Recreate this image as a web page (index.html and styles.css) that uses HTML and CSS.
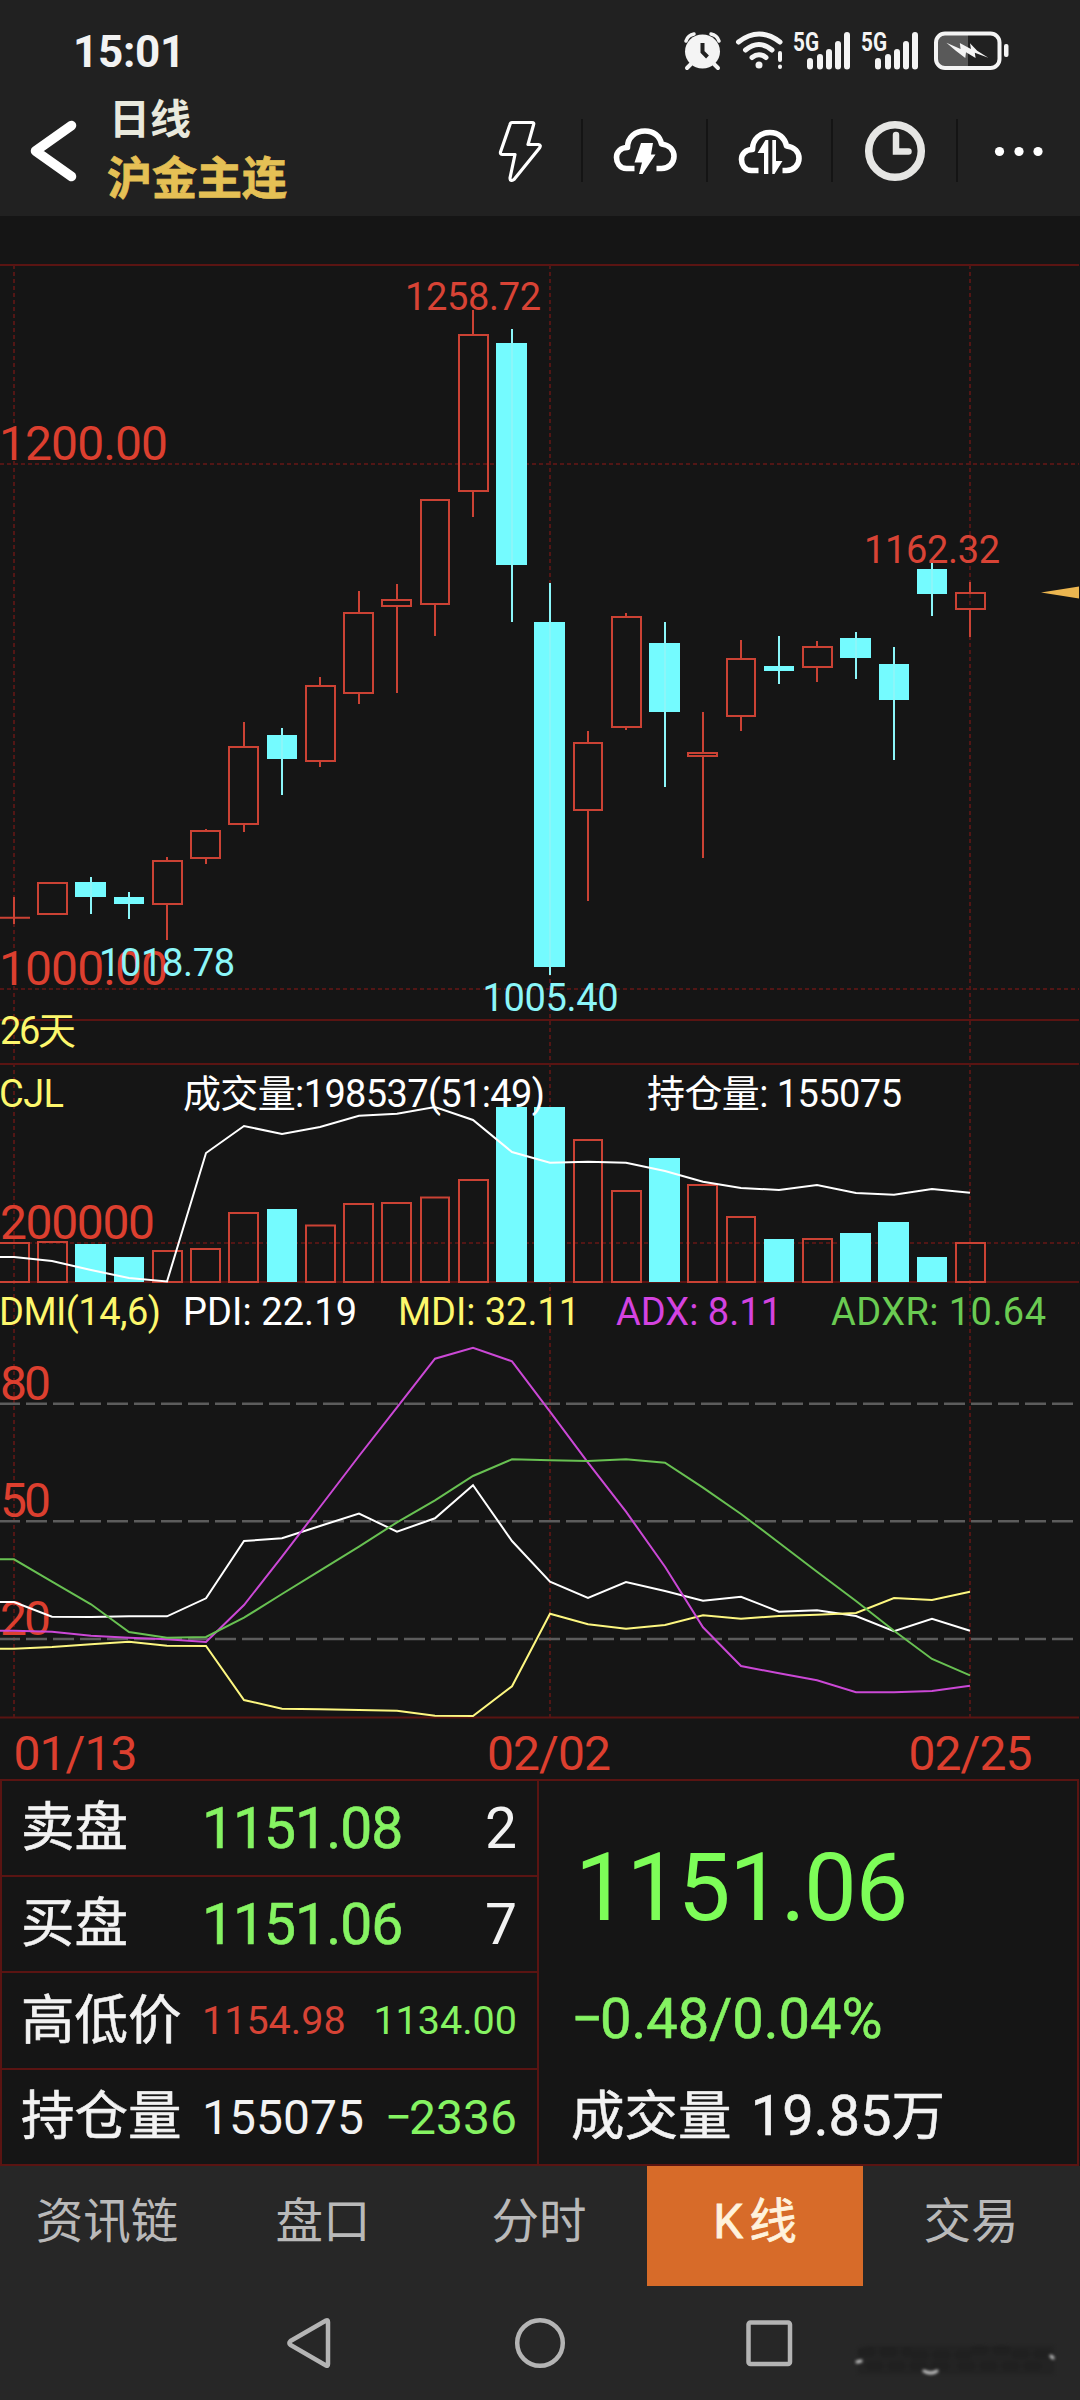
FILE: index.html
```html
<!DOCTYPE html>
<html lang="zh-CN">
  <head>
    <meta charset="UTF-8" />
    <meta name="viewport" content="width=device-width, initial-scale=1.0" />
    <title>沪金主连 日线</title>
    <link rel="stylesheet" href="styles.css">
  </head>
  <body>
    <header class="header">
      <div class="status">
        <span class="time">15:01</span>
        <svg class="status-icons" width="334" height="44" viewBox="680 28 334 44">
          <!-- alarm -->
          <ellipse cx="702.500" cy="51.500" rx="17.500" ry="17" />
          <path class="s3" d="M686 41Q688 35 694 34M719 41Q717 35 711 34" />
          <path class="s4" d="M691 64l-4 4M714 64l4 4" />
          <path class="cut" d="M702.500 43v9l5 5" />
          <!-- wifi -->
          <path class="s5" d="M738.500 42Q759 26 780 42M745.500 50Q759 39 772 50M752 57.500Q759 52 766 57.500" />
          <circle cx="759" cy="65" r="3.500" />
          <path class="cut-thick" d="M780 52v16" />
          <path class="s4" d="M780 53v7M780 66.500v.5" />
          <!-- signal -->
          <text x="793" y="51" textLength="26" lengthAdjust="spacingAndGlyphs">5G</text>
          <path class="s6" d="M810 61v5.500M820 57v9.500M829 52v14.500M838 44v22.500M847 35v31.500" />
          <text x="861" y="51" textLength="26" lengthAdjust="spacingAndGlyphs">5G</text>
          <path class="s6" d="M878 61v5.500M888 57v9.500M897 52v14.500M906 44v22.500M915 35v31.500" />
          <!-- battery -->
          <path class="charge" d="M944 34h24v33h-24q-8 0-8-8v-17q0-8 8-8z" />
          <rect class="shell" x="936" y="33.500" width="63.500" height="34.500" rx="9" />
          <rect x="1004" y="44" width="4.500" height="13" rx="2" />
          <path d="M946.400 42.700L960.600 49L959.800 43L970.900 49L970 43.300L977.200 50.700L988.300 57.700L974.800 52.700L975.600 58L966 52.300L965.300 58L955.800 50.700z" />
        </svg>
      </div>
      <div class="bar">
        <svg class="back" width="50" height="66" viewBox="28 118 50 66"><path d="M71.500 125.500L35.500 151L71.500 176.500" /></svg>
        <div class="title">
          <div class="period">日线</div>
          <div class="name">沪金主连</div>
        </div>
        <div class="tools">
          <div class="tool">
            <svg width="70" height="66" viewBox="484.500 118 70 66">
              <path class="line thin" d="M511.500 122.500H531.500Q534 122.500 533 125L527.500 144.500H538Q541 145 539 148L513.500 179.500Q509.500 182 509.500 178L514.500 154.500H502Q499.500 154.500 500 152L509.500 124.500Q510 122.500 511.500 122.500z" />
            </svg>
          </div>
          <div class="tool">
            <svg width="70" height="66" viewBox="609.500 118 70 66">
              <path class="line" d="M634 168.500H626C619 168.500 616 162.500 616 157.500C616 152 620 147.500 627 147.500C627 137 635 131 644.500 131C653 131 659.500 136 661 144C669 145 673.500 150 673.500 156.500C673.500 163 668 168.500 661 168.500H656" />
              <path class="solid" d="M640.500 143H652.500L650.500 154.500H655L642 174H638.500L641.500 162.500H634z" />
            </svg>
          </div>
          <div class="tool">
            <svg width="70" height="66" viewBox="734.500 118 70 66">
              <path class="line" d="M758 170.500H751C744 170.500 741 164.500 741 159.500C741 154 745 149.500 752 149.500C752 139 760 132.500 769.500 132.500C778 132.500 784.500 138 786 146C794 147 798.500 152 798.500 158.500C798.500 165 793 170.500 786 170.500H782" />
              <path class="solid" d="M763.500 174V153H757L765 140H767.800V174zM771.800 140H775.500V161H782L774 174H771.800z" />
            </svg>
          </div>
          <div class="tool">
            <svg width="70" height="66" viewBox="859.500 118 70 66">
              <circle class="ring" cx="894.500" cy="151" r="26.300" />
              <path class="hand" d="M895.500 135V151.500H908" />
            </svg>
          </div>
          <div class="tool">
            <svg width="70" height="66" viewBox="984.500 118 70 66">
              <circle class="solid" cx="1000" cy="151.500" r="4.600" />
              <circle class="solid" cx="1019.500" cy="151.500" r="4.600" />
              <circle class="solid" cx="1038.500" cy="151.500" r="4.600" />
            </svg>
          </div>
        </div>
      </div>
    </header>

    <svg class="chart" width="1080" height="1563" viewBox="0 216 1080 1563">
      <!-- grid -->
      <path class="grid" d="M0 265H1079M0 1020H1079M0 1064H1079M0 1282H1079M0 1717.500H1079" />
      <path class="grid dash" d="M14 265V1717M550 265V1717M970 265V1717M0 464H1079M0 989H1079M0 1243H1079" />
      <path class="level" d="M0 1403.700H1079M0 1521.300H1079M0 1639H1079" />

      <!-- axis text -->
      <g class="axis">
        <text x="-1" y="459.500" textLength="169">1200.00</text>
        <text x="-1" y="984.500" textLength="169">1000.00</text>
        <text x="0" y="1238.500" textLength="155">200000</text>
        <text x="0" y="1399.500" textLength="51">80</text>
        <text x="0" y="1517" textLength="51">50</text>
        <text x="0" y="1634.500" textLength="51">20</text>
        <text x="13.500" y="1769.500" textLength="124">01/13</text>
        <text x="487" y="1769.500" textLength="124">02/02</text>
        <text x="908.500" y="1769.500" textLength="124">02/25</text>
      </g>

      <!-- candles up -->
      <path class="up" d="M0 917.700H30M14 897V924
        M38 883h29v31h-29z
        M153 861h29v43h-29zM167 857v4M167 904V940
        M191 831h29v27h-29zM206 829v2M206 858V864
        M229 747h29v77h-29zM244 722V747M244 824V832
        M306 686h29v75h-29zM320 677V686M320 761V767
        M344 613h29v80h-29zM359 591V613M359 693V704
        M382 600h29v6h-29zM397 584V600M397 606V693
        M421 500h28v104h-28zM435 604V636
        M459 335h29v156h-29zM473 310V335M473 491V517
        M574 743h28v67h-28zM588 731V743M588 810V901
        M612 617h29v110h-29zM626 613V617M626 727V730
        M688 753h29v3h-29zM703 712V753M703 756V858
        M727 659h28v57h-28zM741 640V659M741 716V731
        M803 647h29v20h-29zM817 641V647M817 667V682
        M956 593h29v16h-29zM970 582V593M970 609V637" />
      <!-- candles down -->
      <path class="down" d="M75 882h31v15h-31zM114 897h30v7h-30zM267 735h30v24h-30zM496 343h31v222h-31zM534 622h31v345h-31zM649 643h31v69h-31zM764 666h30v5h-30zM840 638h31v20h-31zM879 664h30v36h-30zM917 569h30v25h-30z" />
      <path class="down-wick" d="M91 877V914M129 892V919M282 728V795M512 329V622M550 583V975M665 622V787M779 636V684M856 632V679M894 647V760M932 563V616" />

      <g class="tag up-tag">
        <text x="405" y="310" textLength="136">1258.72</text>
        <text x="864" y="562.500" textLength="136">1162.32</text>
      </g>
      <g class="tag down-tag">
        <text x="99" y="975.500" textLength="136">1018.78</text>
        <text x="482.500" y="1010.500" textLength="136">1005.40</text>
      </g>
      <path class="pointer" d="M1041 592.500L1079 586.500V598.500z" />
      <text class="tag yellow" x="0" y="1044" textLength="76">26天</text>

      <!-- volume -->
      <path class="up" d="M-1 1243h30v39h-30zM38 1242h29v40h-29zM153 1251h29v31h-29zM191 1249h29v33h-29zM229 1213h29v69h-29zM306 1225.500h29v56.500h-29zM344 1204h29v78h-29zM382 1203h29v79h-29zM421 1197.500h28v84.500h-28zM459 1180h29v102h-29zM574 1140h28v142h-28zM612 1191h29v91h-29zM688 1185h29v97h-29zM727 1217h28v65h-28zM803 1239h29v43h-29zM956 1243h29v39h-29z" />
      <path class="down" d="M75 1244h31v38h-31zM114 1257h30v25h-30zM267 1209h30v73h-30zM496 1107h31v175h-31zM534 1107h31v175h-31zM649 1158h31v124h-31zM764 1239h30v43h-30zM840 1233h31v49h-31zM878 1222h31v60h-31zM917 1257h30v25h-30z" />
      <polyline class="curve white" points="0,1257 14,1257 52,1261 91,1270 129,1278 167,1281.500 206,1153 244,1126 282,1134 320,1127 359,1115.700 397,1113.700 435,1107 473,1120 512,1152 550,1162.700 588,1161.700 626,1162.700 665,1171 703,1181.700 741,1188 779,1190 817,1185 856,1193 894,1194.700 932,1189 970,1192.700" />
      <text class="tag yellow" x="-1" y="1106.500" textLength="65">CJL</text>
      <text class="tag" x="183" y="1106.500" textLength="362">成交量:198537(51:49)</text>
      <text class="tag" x="647" y="1106.500" textLength="255">持仓量: 155075</text>

      <!-- DMI -->
      <text class="tag yellow" x="-1" y="1324.500" textLength="162">DMI(14,6)</text>
      <text class="tag" x="183" y="1324.500" textLength="174">PDI: 22.19</text>
      <text class="tag yellow" x="398" y="1324.500" textLength="182">MDI: 32.11</text>
      <text class="tag magenta" x="616" y="1324.500" textLength="166">ADX: 8.11</text>
      <text class="tag green" x="831" y="1324.500" textLength="215">ADXR: 10.64</text>
      <polyline class="curve white" points="0,1602 14,1602 52,1616.700 91,1617 129,1616.300 167,1616.300 206,1598.300 244,1541 282,1538.300 320,1526 359,1513.500 397,1531.700 435,1518.300 473,1485.300 512,1541 550,1581.700 588,1598 626,1582 665,1591 703,1600.700 741,1596.700 779,1611.700 817,1610.300 856,1616 894,1631.300 932,1618.700 970,1630.700" />
      <polyline class="curve yellow" points="0,1648.700 14,1648.700 52,1647 91,1644.300 129,1641.700 167,1645.700 206,1646 244,1700 282,1708.700 320,1709.300 359,1710 397,1710.700 435,1715.700 473,1716 512,1686.300 550,1613.700 588,1624.300 626,1628.700 665,1625 703,1615.300 741,1618.700 779,1616 817,1614.700 856,1613 894,1598 932,1600 970,1591.700" />
      <polyline class="curve magenta" points="0,1630.700 14,1630.700 52,1631.700 91,1635.700 129,1637.700 167,1639.300 206,1642 244,1605 282,1556.700 320,1507 359,1456 397,1407.300 435,1358.700 473,1347.700 512,1361.300 550,1411.700 588,1462.700 626,1511.700 665,1566.700 703,1627.300 741,1666 779,1673.300 817,1680.300 856,1692.300 894,1692.300 932,1691 970,1685.700" />
      <polyline class="curve green" points="0,1559.300 14,1559.300 52,1581.700 91,1604.300 129,1632 167,1637.700 206,1637 244,1617.700 282,1594 320,1570.700 359,1546.700 397,1522.300 435,1500.300 473,1476 512,1459.300 550,1460.300 588,1461 626,1459.300 665,1462.700 703,1487.700 741,1514 779,1542.700 817,1571.700 856,1601 894,1630.700 932,1659 970,1675.300" />
    </svg>

    <section class="quote">
      <div class="book">
        <div class="row"><span class="label">卖盘</span><span class="price">1151.08</span><span class="count">2</span></div>
        <div class="row"><span class="label">买盘</span><span class="price">1151.06</span><span class="count">7</span></div>
        <div class="row"><span class="label">高低价</span><span class="small high">1154.98</span><span class="small low">1134.00</span></div>
        <div class="row"><span class="label">持仓量</span><span class="mid">155075</span><span class="mid low"><i class="minus">−</i>2336</span></div>
      </div>
      <div class="last">
        <div class="last-price">1151.06</div>
        <div class="change"><i class="minus">−</i>0.48/0.04%</div>
        <div class="volume">成交量 <span>19.85</span>万</div>
      </div>
    </section>

    <nav class="tabs">
      <div class="tab">资讯链</div>
      <div class="tab">盘口</div>
      <div class="tab">分时</div>
      <div class="tab active">K线</div>
      <div class="tab">交易</div>
    </nav>

    <footer class="sysnav">
      <svg width="1080" height="114" viewBox="0 2286 1080 114">
        <path class="key" d="M290.500 2341L326 2320.500Q328 2319.500 328 2322V2364Q328 2366.500 326 2365.500L290.500 2345Q288.500 2343 290.500 2341z" />
        <circle class="key" cx="540" cy="2343" r="22.800" />
        <rect class="key" x="748.500" y="2322.500" width="41.500" height="41.500" rx="2" />
        <g class="smudge">
          <path class="patch" d="M866 2346H1054V2374H858V2354z" />
          <path class="dark" d="M862 2352h46M915 2355h52M975 2350h38M1016 2354h36M870 2366h80M962 2366h88" />
          <path class="light" d="M857 2362l4-1M924 2371q7 4 13 0M1051 2356l2 2" />
        </g>
      </svg>
    </footer>
  </body>
</html>
```

FILE: styles.css
```css
* {
  box-sizing: border-box;
}
body {
  margin: 0;
  width: 1080px;
  height: 2400px;
  overflow: hidden;
  display: flex;
  flex-direction: column;
  background: #151515;
  color: #f2f2f2;
  font-family: Roboto, "Noto Sans CJK SC", sans-serif;
}
svg {
  display: block;
  flex: none;
}

/* header */
.header {
  height: 216px;
  background: #212121;
}
.status {
  display: flex;
  align-items: center;
  height: 100px;
  padding: 0 66px 0 73px;
}
.time {
  padding-top: 4px;
  font-size: 44px;
  font-weight: 700;
  letter-spacing: -0.3px;
}
.status-icons {
  margin-left: auto;
  fill: #f4f4f4;
}
.status-icons path[class^="s"] {
  fill: none;
  stroke: #f4f4f4;
  stroke-linecap: round;
}
.s3 {
  stroke-width: 3.5;
}
.s4 {
  stroke-width: 4;
}
.s5 {
  stroke-width: 5;
}
.s6 {
  stroke-width: 6;
}
.cut,
.cut-thick {
  fill: none;
  stroke: #212121;
  stroke-width: 4;
}
.cut-thick {
  stroke-width: 9;
}
.status-icons text {
  font-size: 26px;
  font-weight: 700;
}
.charge {
  fill: #595959;
}
.shell {
  fill: none;
  stroke: #f4f4f4;
  stroke-width: 4;
}

.bar {
  display: flex;
  height: 116px;
  padding: 0 0 0 28px;
}
.back {
  margin-top: 18px;
  fill: none;
  stroke: #fff;
  stroke-width: 9.5;
  stroke-linecap: round;
  stroke-linejoin: round;
}
.title {
  flex: none;
  width: 352px;
  margin: -10px 0 0 28px;
  white-space: nowrap;
}
.period {
  padding-left: 3px;
  height: 60px;
  line-height: 60px;
  font-size: 41px;
  font-weight: 700;
  color: #e9e9dd;
}
.name {
  padding-left: 1px;
  height: 60px;
  line-height: 60px;
  font-size: 45px;
  font-weight: 700;
  color: #e5c055;
  -webkit-text-stroke: 0.8px #e5c055;
}
.tools {
  display: flex;
  flex: none;
  margin-top: 19px;
}
.tool {
  flex: none;
  width: 125px;
  height: 63px;
  display: flex;
  justify-content: center;
  align-items: center;
  border-right: 2px solid #141414;
}
.tool:last-child {
  width: 122px;
  border: none;
}
.line {
  fill: none;
  stroke: #fff;
  stroke-width: 5.6;
  stroke-linejoin: round;
}
.thin {
  stroke-width: 3.2;
}
.solid {
  fill: #fff;
}
.ring {
  fill: none;
  stroke: #e6e6e4;
  stroke-width: 7.5;
}
.hand {
  fill: none;
  stroke: #e6e6e4;
  stroke-width: 6.5;
  stroke-linecap: round;
}

/* chart */
.chart {
  overflow: visible;
}
.grid {
  fill: none;
  stroke: #5a1412;
  stroke-width: 2;
}
.dash {
  stroke: #521615;
  stroke-dasharray: 4 3;
}
.level {
  stroke: #5c5c5c;
  stroke-width: 2.5;
  stroke-dasharray: 21 6;
  stroke-dashoffset: 1;
}
.axis {
  font-size: 48px;
  fill: #dc3f2f;
}
.up {
  fill: none;
  stroke: #cb4234;
  stroke-width: 2;
}
.down {
  fill: #74fbff;
}
.down-wick {
  stroke: #8bf6f9;
  stroke-width: 2;
}
.tag {
  font-size: 38px;
  fill: #fff;
}
.up-tag {
  fill: #d84335;
}
.down-tag {
  fill: #8bf6f9;
}
.pointer {
  fill: #ecb650;
}
.curve {
  stroke: #fff;
  stroke-width: 2;
}
.curve.yellow {
  stroke: #fdf780;
}
.curve.magenta {
  stroke: #cb48d6;
}
.curve.green {
  stroke: #68c152;
}
polyline.curve {
  fill: none;
}
text.yellow {
  fill: #fdf76c;
}
text.magenta {
  fill: #d443e0;
}
text.green {
  fill: #6acb52;
}

/* quote */
.quote {
  display: flex;
  flex: none;
  width: 1079px;
  height: 387px;
  border: 2px solid #5a1412;
}
.book {
  width: 537px;
  display: grid;
  grid-template-rows: 96px 96px 97px auto;
  border-right: 2px solid #5a1412;
}
.row {
  display: flex;
  align-items: center;
  padding: 0 20px 0 19px;
  border-bottom: 2px solid #5a1412;
}
.row:last-child {
  border: none;
}
.row span:last-child {
  margin-left: auto;
}
.label {
  width: 181px;
  font-size: 53.500px;
  line-height: 60px;
}
.label,
.volume {
  -webkit-text-stroke: 0.6px #f2f2f2;
}
.price,
.count {
  font-size: 57px;
  letter-spacing: -1px;
}
.price,
.change {
  -webkit-text-stroke: 0.6px #85f362;
}
.price,
.low {
  color: #85f362;
}
.count {
  letter-spacing: 0;
}
.small {
  font-size: 39.500px;
}
.mid {
  font-size: 48px;
}
.high {
  color: #d64335;
}
.minus {
  font-style: normal;
  letter-spacing: -3px;
}
.last {
  padding: 51px 0 0 32px;
  white-space: nowrap;
}
.last-price {
  margin-left: 4px;
  height: 154px;
  line-height: 112px;
  font-size: 94px;
  letter-spacing: -1.4px;
  color: #7dfd58;
}
.change {
  height: 95px;
  line-height: 66px;
  font-size: 56px;
  color: #85f362;
}
.volume {
  line-height: 70px;
  font-size: 53.500px;
}
.volume span {
  margin-left: 6px;
  font-size: 56px;
}

/* bottom */
.tabs {
  display: grid;
  grid-template-columns: repeat(5, 216px);
  height: 120px;
  flex: none;
  margin-left: -1px;
  width: 1081px;
  background: #272727;
}
.tab {
  text-align: center;
  line-height: 113px;
  font-size: 47.500px;
  color: #b9b9b9;
}
.active {
  padding-left: 6px;
  background: #d76b29;
  color: #fff2dc;
  -webkit-text-stroke: 0.8px #fff2dc;
  letter-spacing: 6px;
}
.sysnav {
  height: 114px;
  background: #272727;
}
.key {
  fill: none;
  stroke: #b4b4b4;
  stroke-width: 4.500;
}
.smudge {
  fill: none;
  stroke-linecap: round;
  filter: blur(1.5px);
}
.patch {
  fill: #232323;
}
.dark {
  stroke: #202020;
  stroke-width: 9;
  stroke-dasharray: 9 13;
}
.light {
  stroke: #cfcfcf;
  stroke-width: 3;
}
```
